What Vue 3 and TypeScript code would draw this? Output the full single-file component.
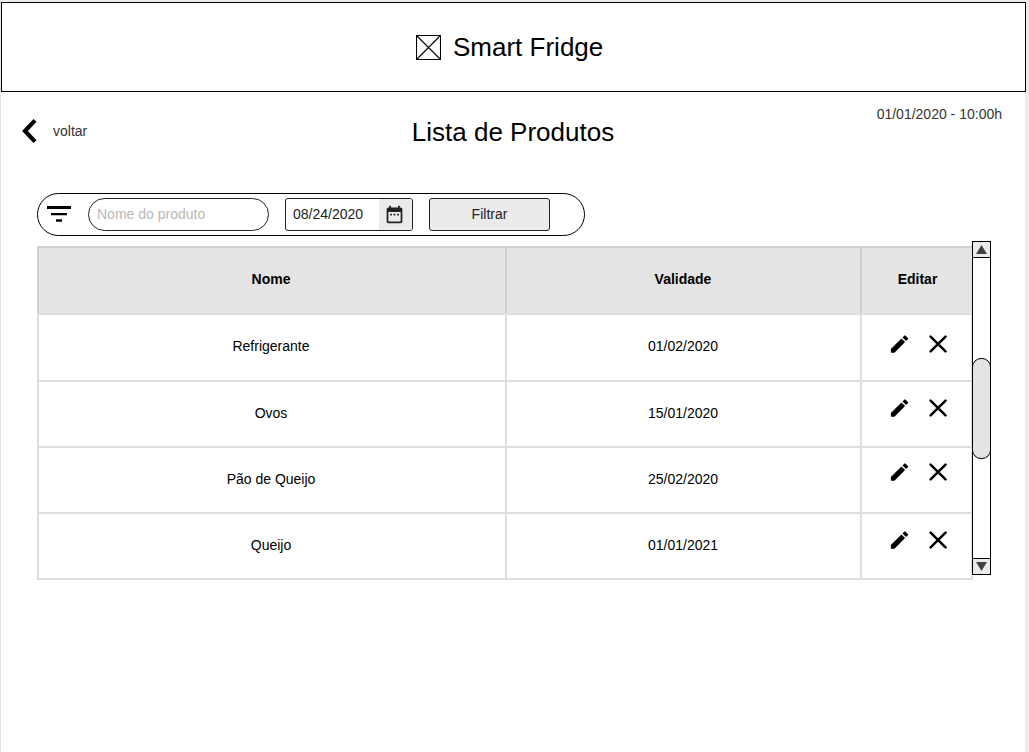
<script setup lang="ts">
import { ref } from 'vue'

interface Product {
  name: string
  expires: string
}

const products: Product[] = [
  { name: 'Refrigerante', expires: '01/02/2020' },
  { name: 'Ovos', expires: '15/01/2020' },
  { name: 'Pão de Queijo', expires: '25/02/2020' },
  { name: 'Queijo', expires: '01/01/2021' },
]

const search = ref('')
</script>

<template>
  <div class="page">
    <header class="brand">
      <svg class="logo" viewBox="0 0 25 25">
        <path d="M.5.5h24v24H.5zM.5.5l24 24M24.5.5l-24 24" fill="none" stroke="#000" stroke-width="1.1" />
      </svg>
      <span>Smart Fridge</span>
    </header>

    <div class="heading">
      <a class="back">
        <svg viewBox="0 0 16 26"><path d="M14 2.4 4 13l10 10.6" fill="none" stroke="#000" stroke-width="4.2" /></svg>
        <span>voltar</span>
      </a>
      <h1>Lista de Produtos</h1>
      <time>01/01/2020 - 10:00h</time>
    </div>

    <form class="filters" @submit.prevent>
      <svg class="filter-icon" viewBox="0 0 24 16">
        <path d="M0 0h24v3H0zM4 7h16v2.3H4zM9 13.2h6v2.5H9z" />
      </svg>
      <input v-model="search" class="search" placeholder="Nome do produto" />
      <div class="date">
        <span>08/24/2020</span>
        <div class="picker">
          <svg viewBox="0 0 24 24">
            <path d="M9 11H7v2h2v-2zm4 0h-2v2h2v-2zm4 0h-2v2h2v-2zm2-7h-1V2h-2v2H8V2H6v2H5c-1.11 0-1.99.9-1.99 2L3 20c0 1.1.89 2 2 2h14c1.1 0 2-.9 2-2V6c0-1.1-.9-2-2-2zm0 16H5V9h14v11z" />
          </svg>
        </div>
      </div>
      <button class="submit">Filtrar</button>
    </form>

    <div class="listing">
      <div class="table">
        <div class="row head">
          <div class="cell">Nome</div>
          <div class="cell expires">Validade</div>
          <div class="cell last">Editar</div>
        </div>
        <div v-for="product in products" :key="product.name" class="row">
          <div class="cell">{{ product.name }}</div>
          <div class="cell expires">{{ product.expires }}</div>
          <div class="cell actions">
            <svg viewBox="0 0 24 24">
              <path d="M3 17.25V21h3.75L17.81 9.94l-3.75-3.75L3 17.25zM20.71 7.04a1 1 0 0 0 0-1.41l-2.34-2.34a1 1 0 0 0-1.41 0l-1.83 1.83 3.75 3.75 1.83-1.83z" />
            </svg>
            <svg viewBox="0 0 24 24">
              <path d="M4.8 4.2l15.6 15.6M20.4 4.2 4.8 19.8" fill="none" stroke="#000" stroke-width="2.6" stroke-linecap="round" />
            </svg>
          </div>
        </div>
      </div>
      <div class="scrollbar">
        <div class="arrow"><svg viewBox="0 0 11 9"><path d="M5.5 0 11 9H0z" /></svg></div>
        <div class="track"><div class="thumb"></div></div>
        <div class="arrow down"><svg viewBox="0 0 11 9"><path d="M0 0h11L5.5 9z" /></svg></div>
      </div>
    </div>
  </div>
</template>

<style>
body {
  margin: 0;
  background: #ebebeb;
}
</style>

<style scoped>
.page {
  box-sizing: border-box;
  width: 1025px;
  height: 752px;
  padding-top: 2px;
  border-left: 1px solid #e3e3e3;
  background: linear-gradient(#ebebeb 2px, #fff 2px);
  font: 14px/16px "Liberation Sans", Arial, sans-serif;
  color: #000;
}
.page *, .page svg {
  box-sizing: border-box;
}
svg {
  display: block;
  flex: none;
}
.brand {
  display: flex;
  align-items: center;
  gap: 12px;
  width: 1025px;
  height: 90px;
  padding-left: 414px;
  border: 1px solid #000;
  font-size: 26px;
  line-height: 30px;
}
.logo {
  width: 25px;
  height: 25px;
  margin-top: 1px;
}
.heading {
  display: grid;
  grid-template-columns: 302px 1fr 299px;
  height: 101px;
  padding: 0 23px 0 20px;
  color: #333;
}
.back {
  display: flex;
  align-items: center;
  gap: 16px;
  height: 26px;
  margin-top: 26px;
}
.back svg {
  width: 16px;
  height: 26px;
}
h1 {
  margin: 25px 0 0;
  color: #000;
  font-size: 26px;
  font-weight: 400;
  line-height: 30px;
  text-align: center;
}
time {
  margin-top: 14px;
  text-align: right;
}
.filters {
  display: flex;
  align-items: center;
  width: 548px;
  height: 43px;
  margin-left: 36px;
  padding-left: 9px;
  border: 1px solid #000;
  border-radius: 22px;
}
.filter-icon {
  width: 24px;
  height: 16px;
  margin: 0 17px 1px 0;
}
.search {
  width: 181px;
  height: 33px;
  padding: 0 8px 2px;
  border: 1px solid #222;
  border-radius: 17px;
  outline: 0;
  background: #fff;
  font: inherit;
}
.search::placeholder {
  color: #b8b8b8;
  opacity: 1;
}
.date {
  display: flex;
  justify-content: space-between;
  align-items: center;
  width: 128px;
  height: 33px;
  margin: 0 16px;
  padding-left: 7px;
  border: 1px solid #222;
  border-radius: 3px;
  color: #222;
  overflow: hidden;
}
.date span {
  margin-bottom: 2px;
}
.picker {
  width: 33px;
  height: 31px;
  padding: 5px 0 0 5px;
  background: #ebebeb;
}
.picker svg {
  width: 21px;
  height: 21px;
  fill: #222;
}
.submit {
  width: 121px;
  height: 33px;
  padding: 0 0 2px;
  border: 1px solid #222;
  border-radius: 3px;
  background: #ebebeb;
  color: #222;
  font: inherit;
}
.listing {
  display: flex;
  margin: 5px 0 0 36px;
}
.table {
  width: 936px;
  height: 334px;
  margin: 5px -1px 0 0;
  border: solid #dedede;
  border-width: 0 2px 2px 0;
}
.row {
  display: grid;
  grid-template-columns: 468px 355px 111px;
  height: 66px;
}
.head, .head + .row {
  height: 67px;
}
.head {
  grid-template-columns: 468px 355px 113px;
  margin-right: -2px;
  background: #e4e4e4;
  font-weight: 700;
}
.cell {
  display: flex;
  align-items: center;
  justify-content: center;
  padding: 0 2px 3px 0;
  border: solid rgba(0, 0, 0, 0.13);
  border-width: 2px 0 0 2px;
}
.cell.expires {
  padding-right: 1px;
}
.head .cell {
  border-color: rgba(0, 0, 0, 0.09);
}
.head .last {
  padding-right: 0;
}
.cell.actions {
  align-items: flex-start;
  justify-content: flex-start;
  gap: 15px;
  padding: 17px 0 0 26px;
}
.row:nth-child(3) .actions {
  padding-top: 14px;
}
.row:nth-child(4) .actions {
  padding-top: 12px;
}
.row:nth-child(5) .actions {
  padding-top: 14px;
}
.actions svg {
  width: 23px;
  height: 24px;
}
.scrollbar {
  display: flex;
  flex-direction: column;
  z-index: 1;
  width: 19px;
  height: 334px;
  border: 1px solid #000;
  background: #fff;
}
.arrow {
  display: flex;
  align-items: center;
  justify-content: center;
  height: 16px;
  border-bottom: 1px solid #000;
  background: #ebebeb;
}
.arrow.down {
  border-top: 1px solid #000;
  border-bottom: 0;
}
.arrow svg {
  width: 11px;
  height: 9px;
  fill: #444;
}
.track {
  flex: 1;
  padding-top: 100px;
}
.thumb {
  width: 19px;
  height: 101px;
  margin-left: -1px;
  border: 1px solid #000;
  border-radius: 9px;
  background: #e4e4e4;
}
</style>
